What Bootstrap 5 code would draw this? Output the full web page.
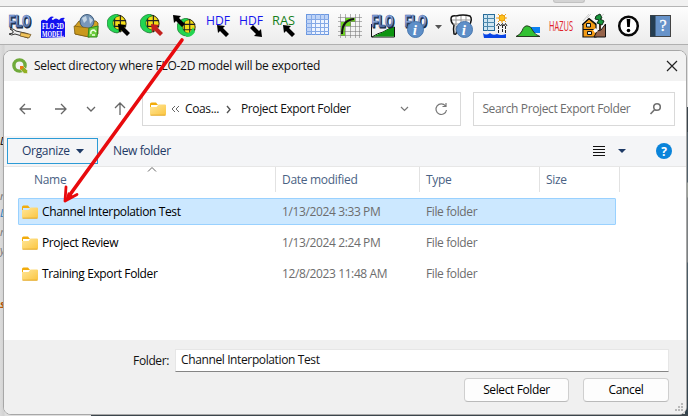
<!DOCTYPE html>
<html lang="en">
<head>
<meta charset="utf-8">
<title>Select directory</title>
<link rel="stylesheet" href="https://cdn.jsdelivr.net/npm/bootstrap@5.3.0/dist/css/bootstrap.min.css">
<style>
body{width:688px;height:416px;overflow:hidden;background:#d9d9d9;font:12px/16px "Open Sans","Noto Sans",sans-serif;letter-spacing:-.38px;color:#111}
svg{display:block;flex:none;overflow:visible;letter-spacing:0}
.app{width:688px;height:416px}
.strip{height:6px;background:#f1f1f1}
.grip-top{width:32px;height:3px;margin-left:553px;background:#d4d4d4;border:solid #c2c2c2;border-width:0 1px 1px;border-radius:0 0 3px 3px}
.tools{height:39px;border-top:1px solid #b5b5b5;border-bottom:1px solid #b0b0b0;background:linear-gradient(#fdfdfd,#ececec);gap:9px;padding:7px 0 0 8px}
.backdrop{left:0;top:45px;width:688px;height:371px;background:linear-gradient(90deg,#dcdcdc 0,#d2d2d2 4px,#dedede 5px,#dedede 100%)}
.edge{right:0;top:107px;width:3px;height:309px;background:linear-gradient(#3a454d 0 25px,#52616b 25px 75px,#9a9f98 76px 90px,#7b8082 91px 155px,#4d5e68 156px,#31414b)}
.edge-bottom{left:91px;right:0;bottom:0;height:2px;background:#3c464c}
.behind{left:0;width:4px;height:16px;overflow:hidden;font-size:11px;font-style:italic;color:#777}
.dialog{left:3px;top:50px;width:684px;height:365px;border:1px solid #a7a7a7;border-radius:8px;background:#fff;overflow:hidden}
.titlebar{height:30px;background:#f2f2f2;padding:0 9px 0 8px}
.caption{letter-spacing:-.27px}
.navrow{height:55px;padding:1px 11px 0 15px}
.field{height:34px;border:1px solid #d9d9d9}
.crumbs{width:320px;margin-left:17px;padding:0 13px 0 7px}
.search{width:202px;margin-left:12px;padding:0 13px 0 8px;color:#6d6d6d}
.cmdbar{height:31px;background:#f4f5f7;border-bottom:1px solid #e7e7e7;color:#1e3a66;padding:2px 10px 0 3px}
.organize{width:91px;height:26px;border:1px solid #2c9bd6;padding-left:14px;gap:6px;color:#1e3a66;letter-spacing:-.3px}
.cols{display:grid;grid-template-columns:258px 144px 120px 80px;margin-left:14px}
.heads{height:25px;color:#4a6284;letter-spacing:-.3px}
.heads>div{border-right:1px solid #e2e2e2;padding:5px 0 0 6px}
.heads>div:first-child{padding-left:16px}
.sort{left:130px;top:0}
.rows{padding-top:6px}
.line{width:598px;height:27px;margin-bottom:4px;border:1px solid transparent;color:#6d6d6d}
.line.picked{background:#cce8ff;border-color:#99d1ff;border-radius:1px}
.line>div{padding-left:5px;align-self:center}
.line>div:first-child{padding-left:3px;color:#000;gap:4px}
.foot{left:0;right:0;bottom:0;height:74px;background:#f0f0f0}
.entry{width:494px;height:23px;background:#fff;border:1px solid #e6e6e6;border-bottom:1px solid #858585;padding:2px 5px}
.push{height:24px;border:1px solid #cfcfcf;border-bottom-color:#bababa;border-radius:4px;background:#fdfdfd;color:#000;font-size:12px;line-height:16px;padding:0;letter-spacing:-.38px}
.overlay{left:0;top:0}
</style>
<script src="https://cdn.jsdelivr.net/npm/bootstrap@5.3.0/dist/js/bootstrap.bundle.min.js"></script>
</head>
<body>
<svg width="0" height="0" class="position-absolute">
<defs>
<linearGradient id="fg" x1="0" y1="0" x2="1" y2="1"><stop stop-color="#ffe79a"/><stop offset="1" stop-color="#fbc540"/></linearGradient>
<linearGradient id="met" x1="0" y1="0" x2="0" y2="1"><stop stop-color="#6f95d8"/><stop offset=".45" stop-color="#a9c3ee"/><stop offset="1" stop-color="#1f3c70"/></linearGradient>
<symbol id="folder" viewBox="0 0 16 14"><path d="M0 2Q0 .5 1.500 .5H6L8 3H1V7H0z" fill="#f2ac0c"/><path d="M0 5H6.500L8.500 2.500H15Q16 2.500 16 3.500V12Q16 13.500 14.500 13.500H1.500Q0 13.500 0 12z" fill="url(#fg)"/><path d="M.5 13.200H15.500" stroke="#dda01b" stroke-width=".8"/></symbol>
<symbol id="ptr" viewBox="0 0 12 12"><path d="M0 0L8 1 6 3 12 9 9 12 3 6 1 8z"/></symbol>
<symbol id="flo" viewBox="0 0 24 15"><g font-family="Liberation Sans,sans-serif" font-weight="bold" font-size="17"><text x="1.500" y="14" textLength="22" lengthAdjust="spacingAndGlyphs" fill="#16233c" stroke="#16233c" stroke-width="1.200">FLO</text><text x=".5" y="12.700" textLength="22" lengthAdjust="spacingAndGlyphs" fill="url(#met)" stroke="#3f63a3" stroke-width=".7">FLO</text></g></symbol>
<symbol id="globe" viewBox="0 0 22 22"><circle cx="11" cy="10" r="9" fill="#f3dc19" stroke="#202000"/><path d="M2 7H20M2 13H20M8 1V19M14 1V19" stroke="#222" stroke-width="1.200"/><path d="M10 0Q0 2 0 10 1 19 11 20L14 17Q6 16 6 9 7 3 13 2z" fill="#23d451" stroke="#075f1c" stroke-width=".6"/></symbol>
<symbol id="info" viewBox="0 0 18 18"><circle cx="9" cy="9" r="8.500" fill="#5e8fc8" stroke="#4776ac"/><text x="6" y="14.500" font-family="Liberation Serif,serif" font-weight="bold" font-style="italic" font-size="16" fill="#fff">i</text></symbol>
</defs>
</svg>
<div class="app position-relative">
<div class="strip"><div class="grip-top"></div></div>
<div class="tools d-flex">
<svg width="24" height="24"><use href="#flo" width="24" height="15"/><path d="M2 15Q5 14 8 17L19 19.500 22 21 20 24 14 22 7 20Q3 22 1 20L5 19 5 17z" fill="#eee" stroke="#333"/><path d="M13 18.500L23 20.500 21 24 12 22z" fill="#f0c35a" stroke="#6d5020" stroke-width=".7"/></svg>
<svg width="24" height="24"><path d="M0 24V7Q2 5 4 6L6 7Q9 1 13 3 9 5 12 6 15 3 18 6 20 3 24 4 21 6 24 8V23z" fill="#1212f0"/><g fill="#fff" font-family="Liberation Serif,serif" font-weight="bold" font-size="8"><text x="1" y="15" textLength="22" lengthAdjust="spacingAndGlyphs">FLO-2D</text><text x="1" y="23" textLength="22" lengthAdjust="spacingAndGlyphs">MODEL</text></g></svg>
<svg width="24" height="24"><path d="M1 12L5 7 22 7 24 9V20L15 23 1 20z" fill="#d3a124" stroke="#72530b" stroke-width=".8"/><circle cx="13" cy="7.500" r="7" fill="#7897b9" stroke="#3f5c7c"/><path d="M8 4L12 2 13 6 10 9zM15 3L19 6 16 10z" fill="#c5d6e5"/><path d="M0 12L15 14V23L1 20z" fill="#c9981c" stroke="#72530b" stroke-width=".6"/><path d="M15 14L24 12 23 23 14 23z" fill="#6acc3a" stroke="#2e8a19"/><path d="M17 20Q16 16 20 16L22 18M18 21L21 21" fill="none" stroke="#efffe5" stroke-width="1.500"/></svg>
<svg width="24" height="24"><use href="#globe" width="21" height="21"/><use href="#ptr" x="11" y="10" width="12" height="12"/></svg>
<svg width="24" height="24"><use href="#globe" width="21" height="21"/><use href="#ptr" x="11" y="10" width="12" height="12" fill="#c3221f"/></svg>
<svg width="24" height="24"><use href="#globe" x="4" y="4" width="20" height="20"/><path d="M9 19Q17 22 20 13L22 18Q19 23 14 23z" fill="#23d451"/><use href="#ptr" x="0" y="1" width="12" height="12"/></svg>
<svg width="24" height="24"><text x="0" y="10.500" font-size="13" textLength="24" lengthAdjust="spacingAndGlyphs" fill="#1414ee">HDF</text><use href="#ptr" x="11" y="11" width="12" height="12"/></svg>
<svg width="24" height="24"><text x="0" y="10.500" font-size="13" textLength="24" lengthAdjust="spacingAndGlyphs" fill="#1414ee">HDF</text><use href="#ptr" transform="translate(23 23) rotate(180)" width="12" height="12"/></svg>
<svg width="24" height="24"><text x="0" y="10.500" font-size="13" textLength="23" lengthAdjust="spacingAndGlyphs" fill="#17801b">RAS</text><use href="#ptr" x="11" y="11" width="12" height="12"/></svg>
<svg width="24" height="24"><rect x="1.500" y=".5" width="22" height="20" fill="#eef4ff" stroke="#6c98e0"/><path d="M2 1H23V5H7V20H2z" fill="#bfd4f7"/><path d="M1 5.500H24M1 9.500H24M1 13.500H24M1 17.500H24M6.500 0V21M10.500 0V21M15.500 0V21M19.500 0V21" stroke="#85a9e6"/></svg>
<svg width="24" height="24"><path d="M3 8H7V4H17V8H13V12H7V22H3z" fill="#6ed321"/><path d="M0 3.500H24M0 7.500H24M0 12.500H24M0 17.500H24M0 21.500H24M2.500 0V24M7.500 0V24M12.500 0V24M17.500 0V24M21.500 0V24" stroke="#777" stroke-opacity=".55"/><path d="M4 20Q4 6 16 5" fill="none" stroke="#111" stroke-width="2"/></svg>
<svg width="24" height="24"><path d="M.5 10V23H23.500V13Q18 14 12 18 7 19 1 23" fill="#fff" stroke="#111"/><path d="M2 22.500Q8 20 12 18 18 14 23 13V22.500z" fill="#0d9410"/><use href="#flo" width="24" height="15"/></svg>
<div class="d-flex" style="gap:7px"><svg width="24" height="24"><use href="#flo" width="24" height="15"/><use href="#info" x="3" y="7" width="17" height="17"/></svg><svg width="6" height="24"><path d="M0 11H7L3.500 15z" fill="#555"/></svg></div>
<svg width="24" height="24"><path d="M1 5Q1 1 6 2 13 0 20 2 23 5 19 12L7 13Q7 22 4 20 3 15 4 11 1 9 1 5z" fill="#fff" stroke="#111" stroke-width="1.500"/><path d="M2 6H20M3 10H19M5 15H8M6 2V18M11 2V12M16 2V12" stroke="#999"/><use href="#info" x="6" y="7" width="17" height="17"/></svg>
<svg width="24" height="24"><rect x=".5" y=".5" width="11" height="16" fill="#cfe6f2" stroke="#276b99"/><path d="M0 4.500H12M0 8.500H12M0 12.500H12M4.500 0V17" stroke="#4d89ad"/><path d="M13 4H24M19 0V9M15 0L23 8M23 0L15 8" stroke="#f4a71a"/><circle cx="19" cy="4" r="3" fill="#ffc21c" stroke="#e59b11"/><path d="M15.500 19V11M19.500 18V10M22.500 19V11" stroke="#222" stroke-dasharray="3 1"/><path d="M13.500 12L15.500 9.500 17.500 12M17.500 12L19.500 9.500 21 12M21 12L22.500 9.500 24 12" fill="none" stroke="#222"/><path d="M0 19Q3 22 7 19 10 22 14 20 18 22 23 20V24H1z" fill="#0844e5"/></svg>
<svg width="24" height="24"><path d="M13 13H24V19H15z" fill="#0b7ff0"/><path d="M0 22.500Q4 21 6 17 8 11 12 12 15 12 17 17 19 21 24 22.500z" fill="#32c132" stroke="#273b22"/></svg>
<svg width="24" height="24"><text transform="translate(0 16.500) scale(1 1.300)" font-size="11" textLength="24" lengthAdjust="spacingAndGlyphs" fill="#df2229">HAZUS</text></svg>
<svg width="24" height="24"><path d="M1 7L7 0M5 4L9 0M18 3L22 0" stroke="#ccc"/><path d="M1 10L7 4.500 14 10V23H1z" fill="#f39b15" stroke="#111" stroke-width="1.200"/><path d="M1 15.500H13M0 11L7 5 14 11" stroke="#111" fill="none"/><path d="M4.500 9.500H8.500V13H4.500zM5.500 17.500H9.500V20.500H5.500z" fill="#d5edf5" stroke="#111"/><path d="M12 23L15 17 19 16 23.500 10V23z" fill="#96644b" stroke="#111"/><path d="M18 10V16" stroke="#442d1c" stroke-width="2"/><path d="M14 2L18 0 20 4 18 5 22 7 20 11 15 9 17 6 13 5z" fill="#16943a" stroke="#102e17"/><path d="M11 16L14 14 16 17 13 19z" fill="#fff"/></svg>
<svg width="24" height="24" class="ms-1" style="margin-right:-4px"><circle cx="9.500" cy="12" r="9.300" fill="#fff" stroke="#080808" stroke-width="2.500"/><path d="M7.700 5H11.300L10.800 13H8.200z"/><circle cx="9.500" cy="16.500" r="1.800"/></svg>
<svg width="24" height="24" class="ms-1"><rect x="-1.500" y="1.500" width="20" height="21" fill="#6793c9" stroke="#444"/><rect x="-1.500" y="1.500" width="5" height="21" fill="#243d51"/><text x="7.500" y="16.500" font-family="Liberation Serif,serif" font-size="16" fill="#fff" stroke="#fff" stroke-width=".3">?</text></svg>
</div>
<div class="backdrop position-absolute"></div>
<div class="edge position-absolute"></div>
<div class="edge-bottom position-absolute"></div>
<div class="behind position-absolute" style="top:133px;color:#000">D</div>
<div class="behind position-absolute" style="top:188px">n</div>
<div class="behind position-absolute" style="top:205px;color:#297bc0">L</div>
<div class="behind position-absolute" style="top:224px">n</div>
<div class="behind position-absolute" style="top:242px">y</div>
<div class="behind position-absolute" style="top:296px;color:#b45309"><b>s</b></div>
<div class="dialog position-absolute">
<div class="titlebar d-flex align-items-center">
<svg width="16" height="16"><circle cx="7.500" cy="7.500" r="5.600" fill="none" stroke="#70aa3b" stroke-width="3.400"/><path d="M8 8H11L15.500 12.500V15.500H12L8 11z" fill="#93b023" stroke="#f2f2f2" stroke-width=".6"/><path d="M8 8H11L12 9 9 12 8 11z" fill="#ee7913"/></svg>
<span style="margin-left:6px" class="caption">Select directory where FLO-2D model will be exported</span>
<svg class="ms-auto" width="10" height="10"><path d="M0 0L10 10M10 0L0 10" stroke="#222" stroke-width="1.200"/></svg>
</div>
<div class="navrow d-flex align-items-center">
<svg width="106" height="14" fill="none" stroke="#666" stroke-width="1.300"><path d="M12 7H1M6 2L1 7 6 12M36 7H47M42 2L47 7 42 12M68 5L72 9 76 5M101 13V1M96 6L101 1 106 6"/></svg>
<div class="field crumbs d-flex align-items-center">
<svg width="16" height="14"><use href="#folder" width="16" height="14"/></svg>
<svg width="9" height="8" style="margin-left:5px" fill="none" stroke="#666"><path d="M4 1L1 4 4 7M8 1L5 4 8 7"/></svg>
<span style="margin-left:5px">Coas...</span>
<svg width="4" height="7" style="margin-left:8px" fill="none" stroke="#555" stroke-width="1.400"><path d="M0 0L3 3.500 0 7"/></svg>
<span style="margin-left:10px">Project Export Folder</span>
<svg class="ms-auto" width="9" height="6" fill="none" stroke="#777" stroke-width="1.200"><path d="M1 1L4.500 4.500 8 1"/></svg>
<svg width="12" height="12" style="margin-left:26px" fill="none" stroke="#777" stroke-width="1.200"><path d="M10.500 3A5.300 5.300 0 1 0 11.500 7M11 0V3.500H7.500"/></svg>
</div>
<div class="field search d-flex align-items-center"><span>Search Project Export Folder</span><svg class="ms-auto" width="11" height="12" fill="none" stroke="#707070" stroke-width="1.600"><circle cx="7" cy="4" r="3.300"/><path d="M4.700 6.500L.5 11"/></svg></div>
</div>
<div class="cmdbar d-flex">
<div class="organize d-flex align-items-center"><span>Organize</span><svg width="8" height="5"><path d="M0 0H8L4 4.500z" fill="#1e3a66"/></svg></div>
<span style="margin-left:15px;padding-top:5px">New folder</span>
<svg class="ms-auto" width="12" height="11" style="margin-top:8px"><path d="M0 .5H12M0 3.500H12M0 6.500H12M0 9.500H12" stroke="#111"/></svg>
<svg width="8" height="4" style="margin-left:13px;margin-top:11px"><path d="M0 0H8L4 4z" fill="#1e3a66"/></svg>
<svg width="16" height="16" style="margin-left:30px;margin-top:5px;margin-right:4px"><circle cx="8" cy="8" r="8" fill="#0a84da"/><text x="5.200" y="12.500" font-size="12" font-weight="bold" fill="#fff">?</text></svg>
</div>
<div class="heads cols position-relative"><div>Name</div><div>Date modified</div><div>Type</div><div>Size</div><svg class="sort position-absolute" width="8" height="5" fill="none" stroke="#666"><path d="M0 4.500L4 .5 8 4.500"/></svg></div>
<div class="rows">
<div class="line picked cols"><div class="d-flex align-items-center"><svg width="16" height="14"><use href="#folder" width="16" height="14"/></svg>Channel Interpolation Test</div><div>1/13/2024 3:33 PM</div><div>File folder</div></div>
<div class="line cols"><div class="d-flex align-items-center"><svg width="16" height="14"><use href="#folder" width="16" height="14"/></svg>Project Review</div><div>1/13/2024 2:24 PM</div><div>File folder</div></div>
<div class="line cols"><div class="d-flex align-items-center"><svg width="16" height="14"><use href="#folder" width="16" height="14"/></svg>Training Export Folder</div><div>12/8/2023 11:48 AM</div><div>File folder</div></div>
</div>
<div class="foot position-absolute">
<div class="d-flex justify-content-end align-items-center" style="padding:9px 17px 0 0;gap:6px"><span>Folder:</span><div class="entry">Channel Interpolation Test</div></div>
<div class="d-flex justify-content-end" style="padding:6px 17px 0 0;gap:14px"><button class="btn push" style="width:105px">Select Folder</button><button class="btn push" style="width:86px">Cancel</button></div>
<svg class="position-absolute" style="right:3px;bottom:3px" width="8" height="8" fill="#b9b9b9"><path d="M6 0h2v2h-2zM3 3h2v2h-2zM6 3h2v2h-2zM0 6h2v2h-2zM3 6h2v2h-2zM6 6h2v2h-2z"/></svg>
</div>
</div>
<svg class="overlay position-absolute" width="688" height="416"><path d="M182 40L69 196" stroke="#e80a0d" stroke-width="3.600" stroke-linecap="round"/><path d="M66 187L65 201 77 194.500" fill="none" stroke="#e80a0d" stroke-width="2.800" stroke-linecap="round" stroke-linejoin="round"/><path d="M65 201L68 192 73 196z" fill="#e80a0d"/></svg>
</div>
</body>
</html>
